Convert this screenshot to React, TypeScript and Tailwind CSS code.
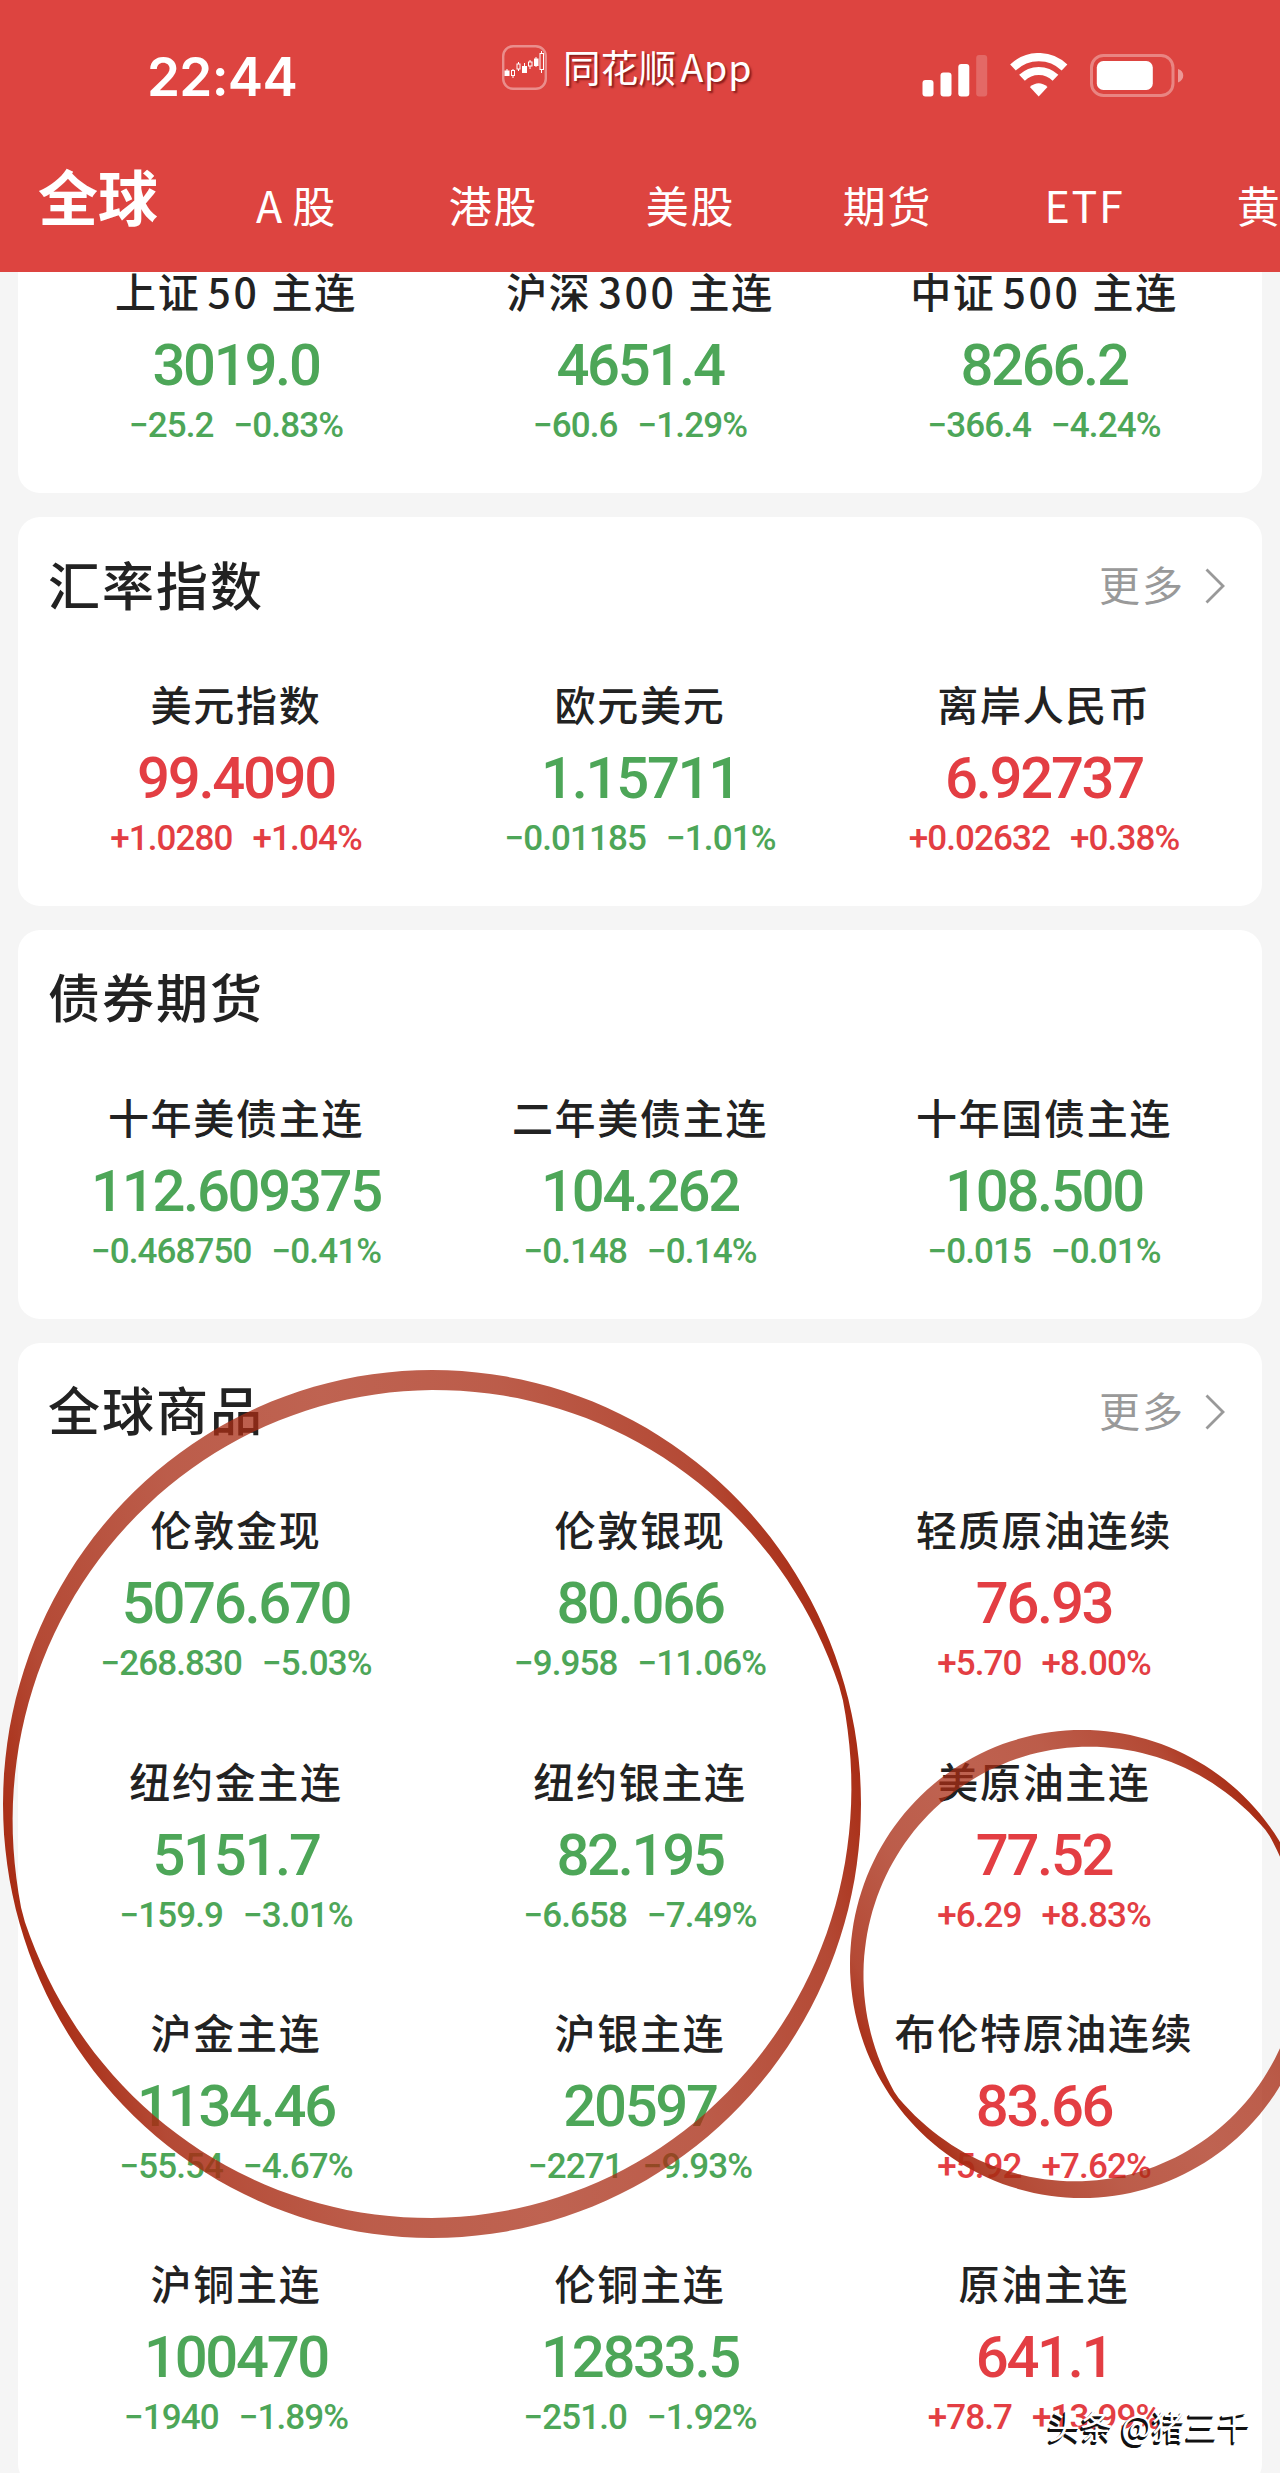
const CJK = "font-['Noto_Sans_CJK_SC',sans-serif]";

type Quote = { name: string; value: string; change: string; percent: string };

const q = (name: string, value: string, change: string, percent: string): Quote => ({
  name,
  value,
  change,
  percent,
});

const indexFutures = [
  q("上证 50 主连", "3019.0", "−25.2", "−0.83%"),
  q("沪深 300 主连", "4651.4", "−60.6", "−1.29%"),
  q("中证 500 主连", "8266.2", "−366.4", "−4.24%"),
];

const currencies = [
  q("美元指数", "99.4090", "+1.0280", "+1.04%"),
  q("欧元美元", "1.15711", "−0.01185", "−1.01%"),
  q("离岸人民币", "6.92737", "+0.02632", "+0.38%"),
];

const bonds = [
  q("十年美债主连", "112.609375", "−0.468750", "−0.41%"),
  q("二年美债主连", "104.262", "−0.148", "−0.14%"),
  q("十年国债主连", "108.500", "−0.015", "−0.01%"),
];

const commodities = [
  q("伦敦金现", "5076.670", "−268.830", "−5.03%"),
  q("伦敦银现", "80.066", "−9.958", "−11.06%"),
  q("轻质原油连续", "76.93", "+5.70", "+8.00%"),
  q("纽约金主连", "5151.7", "−159.9", "−3.01%"),
  q("纽约银主连", "82.195", "−6.658", "−7.49%"),
  q("美原油主连", "77.52", "+6.29", "+8.83%"),
  q("沪金主连", "1134.46", "−55.54", "−4.67%"),
  q("沪银主连", "20597", "−2271", "−9.93%"),
  q("布伦特原油连续", "83.66", "+5.92", "+7.62%"),
  q("沪铜主连", "100470", "−1940", "−1.89%"),
  q("伦铜主连", "12833.5", "−251.0", "−1.92%"),
  q("原油主连", "641.1", "+78.7", "+13.99%"),
];

/** Sets the digits of a name such as "上证 50 主连" with a tight gap before them and a wide one after. */
function QuoteName({ name }: { name: string }) {
  const parts = name.split(" ");
  if (parts.length < 3) return <>{name}</>;
  return (
    <>
      {parts[0]}
      <span className="mr-[12px] ml-[7px] tracking-[2.6px]">{parts[1]}</span>
      {parts[2]}
    </>
  );
}

function QuoteCell({ quote }: { quote: Quote }) {
  const color = quote.change.startsWith("+") ? "text-[#e33e43]" : "text-[#4da658]";
  return (
    <div className="flex h-[251.3px] flex-col items-center pt-[19px] whitespace-nowrap">
      <div className="h-[62px] text-[41px] leading-[58px] font-medium tracking-[1.7px] text-[#222]">
        <QuoteName name={quote.name} />
      </div>
      <div
        className={`h-[84px] font-[Roboto,sans-serif] text-[58px] leading-[84px] font-medium tracking-[-2.3px] ${color}`}
      >
        {quote.value}
      </div>
      <div
        className={`flex h-[38px] gap-[20px] font-[Roboto,sans-serif] text-[35px] leading-[38px] font-medium tracking-[-0.9px] ${color}`}
      >
        <span>{quote.change}</span>
        <span>{quote.percent}</span>
      </div>
    </div>
  );
}

function Card({
  title,
  more,
  quotes,
  className = "",
}: {
  title?: string;
  more?: boolean;
  quotes: Quote[];
  className?: string;
}) {
  return (
    <section className={`mx-[18px] shrink-0 rounded-[22px] bg-white ${className}`}>
      {title && (
        <div className="flex h-[137.5px] items-center justify-between pr-[37px] pl-[30px]">
          <h2 className="pb-[5px] text-[52px] leading-none font-medium tracking-[2px] text-[#222]">{title}</h2>
          {more && (
            <div className="flex items-center gap-[20px] text-[#999]">
              <span className="pb-[5px] text-[41px] leading-none tracking-[2px]">更多</span>
              <svg width="20" height="36" viewBox="0 0 20 36" fill="none">
                <path d="M1.5 1.5 18 18 1.5 34.5" stroke="currentColor" strokeWidth="2.8" />
              </svg>
            </div>
          )}
        </div>
      )}
      <div className="grid grid-cols-3 px-4">
        {quotes.map((item) => (
          <QuoteCell key={item.name} quote={item} />
        ))}
      </div>
    </section>
  );
}

function StatusBar() {
  return (
    <div className="flex h-[152px] text-white">
      <div className="mt-[46px] ml-[147px] w-[355px] font-[Inter,sans-serif] text-[53px] leading-[62px] font-semibold tracking-[-0.7px]">
        22:44
      </div>
      <div className="mt-[45px] flex h-[45px] w-[420px] items-center">
        <svg width="45" height="45" viewBox="0 0 45 45" fill="none">
          <rect x="1.2" y="1.2" width="42.6" height="42.6" rx="10" stroke="white" strokeOpacity=".4" strokeWidth="2.4" />
          <g stroke="white" strokeWidth="1">
            <path d="M5 24v7M11 24v9M16.500 17v9M22.500 18v10M28 15v9M34 12v10M39.500 6v22" />
            <rect x="3" y="26" width="4" height="4.500" fill="white" />
            <rect x="9.500" y="25.500" width="3" height="5" fill="#dd4440" />
            <rect x="15" y="19" width="3" height="5" fill="#dd4440" />
            <rect x="20.500" y="21.500" width="4" height="6" fill="white" />
            <rect x="26.500" y="17" width="3.500" height="4" fill="#dd4440" />
            <rect x="32.500" y="14" width="3.500" height="6.500" fill="white" />
            <rect x="38" y="8.500" width="3.500" height="16" fill="#dd4440" />
          </g>
        </svg>
        <span className="ml-[16px] pb-[3px] text-[37.5px] leading-none tracking-[0.3px] [text-shadow:2px_2px_2px_rgba(80,0,0,0.6)]">
          同花顺<span className="ml-[4px] tracking-[0.9px]">App</span>
        </span>
      </div>
      <svg className="mt-[53px]" width="270" height="46" viewBox="0 0 270 46">
        <g fill="white">
          <rect x=".5" y="27" width="11" height="16.500" rx="3" />
          <rect x="18.500" y="19.500" width="11" height="24" rx="3" />
          <rect x="36.300" y="11" width="11" height="32.500" rx="3" />
          <rect x="54.200" y="2" width="11" height="41.500" rx="3" opacity=".2" />
        </g>
        <g fill="none" stroke="white" strokeWidth="8.200">
          <path d="M91 14.500a37 37 0 0 1 51.500 0" />
          <path d="M100 24.800a24 24 0 0 1 33.500 0" />
        </g>
        <path d="M116.700 43.500 107.900 34q8.800-7.500 17.600 0z" fill="white" />
        <rect x="169.500" y="2.500" width="81.500" height="40" rx="12" fill="none" stroke="white" strokeOpacity=".35" strokeWidth="3" />
        <rect x="174.800" y="8" width="56" height="29" rx="6.500" fill="white" />
        <path d="M256 16c7 2 7 11 0 13.500z" fill="white" fillOpacity=".45" />
      </svg>
    </div>
  );
}

const tabs = ["A 股", "港股", "美股", "期货", "ETF", "黄金"];

function Tabs() {
  return (
    <nav className="flex h-[120px] text-white">
      <div className="w-[197px] shrink-0 pl-[38px] text-[60px] leading-[86px] font-bold whitespace-nowrap">全球</div>
      {tabs.map((tab) => (
        <div
          key={tab}
          className="w-[197px] shrink-0 pl-[2px] text-center text-[43px] leading-[104px] tracking-[1.8px] whitespace-nowrap [word-spacing:-3px]"
        >
          {tab}
        </div>
      ))}
    </nav>
  );
}

/** Outline of a ring drawn with a slanted brush: thin along `angle`, thick across it. */
function brushRing(cx: number, cy: number, rx: number, ry: number, thin: number, extra: number, angle: number) {
  const outer: string[] = [];
  const inner: string[] = [];
  for (let d = 0; d < 360; d += 2) {
    const t = (d * Math.PI) / 180;
    const w = thin + extra * Math.pow(Math.abs(Math.sin(t - (angle * Math.PI) / 180)), 0.85);
    outer.push(`${(cx + rx * Math.cos(t)).toFixed(1)} ${(cy - ry * Math.sin(t)).toFixed(1)}`);
    inner.push(`${(cx + (rx - w) * Math.cos(t)).toFixed(1)} ${(cy - (ry - w) * Math.sin(t)).toFixed(1)}`);
  }
  return `M${outer.join("L")}ZM${inner.join("L")}Z`;
}

function Stops() {
  return (
    <>
      <stop offset="0" stopColor="#a82c14" stopOpacity="1" />
      <stop offset=".1" stopColor="#a82c14" stopOpacity=".86" />
      <stop offset=".3" stopColor="#a82c14" stopOpacity=".77" />
      <stop offset=".5" stopColor="#a82c14" stopOpacity=".74" />
      <stop offset=".7" stopColor="#a82c14" stopOpacity=".77" />
      <stop offset=".9" stopColor="#a82c14" stopOpacity=".86" />
      <stop offset="1" stopColor="#a82c14" stopOpacity="1" />
    </>
  );
}

function Annotations() {
  return (
    <svg className="pointer-events-none absolute top-0 left-0" width="1280" height="2473" viewBox="0 0 1280 2473">
      <defs>
        <linearGradient id="brushA" gradientUnits="userSpaceOnUse" x1="18" y1="1915" x2="846" y2="1693">
          <Stops />
        </linearGradient>
        <linearGradient id="brushB" gradientUnits="userSpaceOnUse" x1="891" y1="2097" x2="1271" y2="1831">
          <Stops />
        </linearGradient>
      </defs>
      <path d={brushRing(432, 1804, 429, 434, 5, 15.5, 15)} fill="url(#brushA)" fillRule="evenodd" />
      <path d={brushRing(1082, 1964, 232, 234, 5, 14, 35)} fill="url(#brushB)" fillRule="evenodd" />
    </svg>
  );
}

export default function App() {
  return (
    <div className={`relative flex h-[2473px] w-[1280px] flex-col overflow-hidden bg-[#f5f5f5] ${CJK}`}>
      <header className="relative z-10 h-[272px] shrink-0 overflow-hidden bg-[#dd4440]">
        <StatusBar />
        <Tabs />
      </header>
      <main className="-mt-[30px] flex flex-col gap-[24px]">
        <Card quotes={indexFutures} />
        <Card title="汇率指数" more quotes={currencies} />
        <Card title="债券期货" quotes={bonds} />
        <Card title="全球商品" more quotes={commodities} />
      </main>
      <Annotations />
      <div className="absolute right-[29px] bottom-[28px] text-[32.5px] leading-[40px] tracking-[0.4px] whitespace-nowrap text-white [text-shadow:-2px_2px_0_#111,-1px_1px_0_#111,-2px_3px_0_#111]">
        头条 @猪三千
      </div>
    </div>
  );
}
